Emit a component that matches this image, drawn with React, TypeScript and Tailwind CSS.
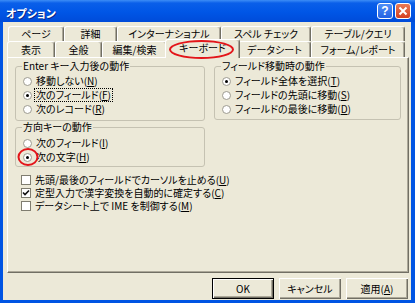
const font = "font-['Noto_Sans_CJK_JP','Noto_Sans',sans-serif] [font-feature-settings:'palt']";

const Hot = ({ k }: { k: string }) => (
  <>
    (<span className="underline underline-offset-[1px]">{k}</span>)
  </>
);

const Radio = ({
  label,
  hot,
  checked = false,
  focus = false,
  mark = false,
}: {
  label: string;
  hot: string;
  checked?: boolean;
  focus?: boolean;
  mark?: boolean;
}) => (
  <div className="h-[14px] flex items-center gap-[4px] pl-[7px]">
    <span className="relative w-[9px] h-[9px] shrink-0 rounded-full border border-[#9d9b90] bg-white flex items-center justify-center">
      {checked && <span className="w-[3px] h-[3px] rounded-full bg-black" />}
      {mark && (
        <span className="absolute left-1/2 top-1/2 -translate-x-1/2 -translate-y-1/2 w-[21px] h-[18px] rounded-[50%] border-2 border-[#e3151a]" />
      )}
    </span>
    <span className={focus ? "outline outline-1 outline-dotted outline-black px-[1px] -ml-[1px]" : ""}>
      {label}
      <Hot k={hot} />
    </span>
  </div>
);

const Check = ({ label, hot, checked = false }: { label: string; hot: string; checked?: boolean }) => (
  <div className="h-[13px] flex items-center gap-[4px] pl-[7px]">
    <span className="w-[10px] h-[10px] shrink-0 border border-[#7f7d70] bg-white flex items-center justify-center">
      {checked && (
        <svg width="8" height="8" viewBox="0 0 8 8">
          <path d="M1 3.5 L3 5.5 L7 1.5" stroke="#111" strokeWidth="1.6" fill="none" />
        </svg>
      )}
    </span>
    <span>
      {label}
      <Hot k={hot} />
    </span>
  </div>
);

const Group = ({ title, className, children }: { title: string; className: string; children: React.ReactNode }) => (
  <fieldset className={`border border-[#c5c2b2] rounded-[3px] ${className}`}>
    <legend className="ml-[6px] px-[1px] leading-[12px]">{title}</legend>
    {children}
  </fieldset>
);

const tabBase =
  "flex items-center justify-center border-t border-l border-r border-t-white border-l-white border-r-[#716f64] rounded-t-[3px] shadow-[inset_-1px_0_0_#aca899]";

const Tab = ({ w, children }: { w: string; children: React.ReactNode }) => (
  <div className={`${tabBase} ${w}`}>{children}</div>
);

const btn =
  "h-[21px] w-[62px] bg-[#ece9d8] flex items-center justify-center shadow-[inset_1px_1px_0_#fff,inset_-1px_-1px_0_#716f64,inset_-2px_-2px_0_#aca899]";

export default function App() {
  return (
    <div className={`w-[415px] h-[303px] bg-[#0054e3] flex flex-col text-[10px] leading-[12px] text-black ${font}`}>
      {/* title bar */}
      <div className="h-[22px] shrink-0 flex items-center justify-between pl-[6px] pr-[4px] bg-[linear-gradient(to_bottom,#3d8df6_0%,#0a5fe9_14%,#0056e6_55%,#004bd9_100%)]">
        <span className="text-white font-bold text-[11px] pt-[3px] [text-shadow:1px_1px_0_#0a2a8a]">オプション</span>
        <div className="flex gap-[2px]">
          <div className="w-[16px] h-[16px] rounded-[3px] border border-white bg-[linear-gradient(to_bottom,#4f8ff7,#2462e3)] flex items-center justify-center text-white font-bold text-[12px] leading-[12px] font-['Liberation_Sans',sans-serif]">
            ?
          </div>
          <div className="w-[16px] h-[16px] rounded-[3px] border border-white bg-[linear-gradient(to_bottom,#ea7a57,#d44020)] flex items-center justify-center">
            <svg width="10" height="10" viewBox="0 0 10 10">
              <path d="M1.5 1.5 L8.5 8.5 M8.5 1.5 L1.5 8.5" stroke="#fff" strokeWidth="2" />
            </svg>
          </div>
        </div>
      </div>

      {/* body */}
      <div className="flex-1 ml-[3px] mr-[4px] mb-[3px] bg-[#ece9d8] flex flex-col pt-[4px] pl-[4px] pr-[2px]">
        <div className="flex h-[15px] ml-[1px]">
          <Tab w="w-[56px]">ページ</Tab>
          <Tab w="w-[53px]">詳細</Tab>
          <Tab w="w-[104px]">インターナショナル</Tab>
          <Tab w="w-[90px]">スペル チェック</Tab>
          <Tab w="w-[94px]">テーブル/クエリ</Tab>
        </div>
        <div className="flex h-[16px]">
          <Tab w="w-[48px]">表示</Tab>
          <Tab w="w-[47px]">全般</Tab>
          <Tab w="w-[65px]">編集/検索</Tab>
          <div className={`${tabBase} w-[75px] -mx-[2px] -mt-[2px] -mb-[1px] relative z-10 bg-[#ece9d8] pb-[2px]`}>
            キーボード
            <span className="absolute left-[3px] top-0 w-[65px] h-[19px] rounded-[50%] border-2 border-[#e3151a]" />
          </div>
          <Tab w="w-[73px]">データシート</Tab>
          <Tab w="w-[94px]">フォーム/レポート</Tab>
        </div>

        {/* panel */}
        <div className="flex-1 w-[402px] border-t border-l border-r border-b border-t-white border-l-white border-r-[#716f64] border-b-[#716f64] shadow-[inset_-1px_-1px_0_#aca899] pt-[2px] pl-[7px]">
          <div className="flex gap-[9px] items-start">
            <div className="flex flex-col w-[190px]">
              <Group title="Enter キー入力後の動作" className="pt-[2px] pb-[4px]">
                <Radio label="移動しない" hot="N" />
                <Radio label="次のフィールド" hot="F" checked focus />
                <Radio label="次のレコード" hot="R" />
              </Group>
              <Group title="方向キーの動作" className="pt-[3px] pb-[2px]">
                <Radio label="次のフィールド" hot="I" />
                <Radio label="次の文字" hot="H" checked mark />
              </Group>
            </div>
            <Group title="フィールド移動時の動作" className="w-[187px] pt-[2px] pb-[3px]">
              <Radio label="フィールド全体を選択" hot="T" checked />
              <Radio label="フィールドの先頭に移動" hot="S" />
              <Radio label="フィールドの最後に移動" hot="D" />
            </Group>
          </div>
          <div className="pt-[6px] -ml-[1px]">
            <Check label="先頭/最後のフィールドでカーソルを止める" hot="U" />
            <Check label="定型入力で漢字変換を自動的に確定する" hot="C" checked />
            <Check label="データシート上で IME を制御する" hot="M" />
          </div>
        </div>

        {/* buttons */}
        <div className="flex justify-end gap-[5px] mt-[5px] mb-[1px] pr-[1px]">
          <button className={`${btn} border border-black`}>OK</button>
          <button className={btn}>キャンセル</button>
          <button className={btn}>
            適用<Hot k="A" />
          </button>
        </div>
      </div>
    </div>
  );
}
